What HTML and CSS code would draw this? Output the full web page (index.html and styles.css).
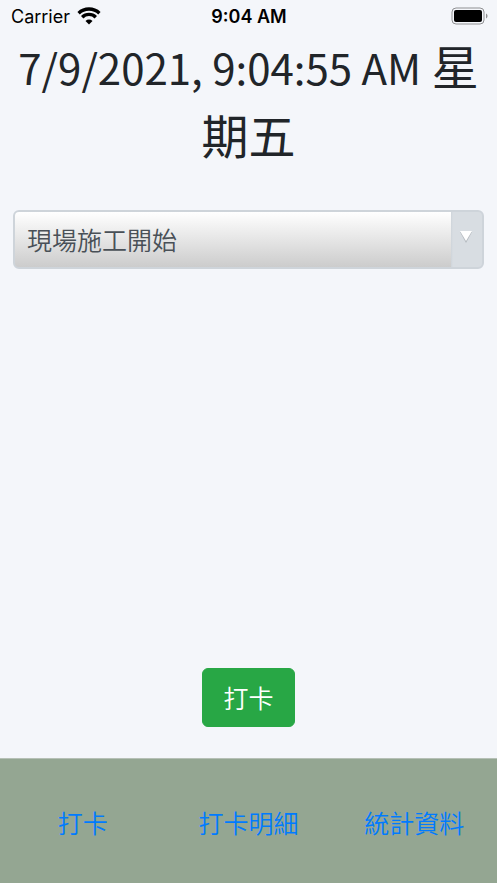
FILE: index.html
```
<!DOCTYPE html>
<html lang="zh-Hant">
<head>
  <meta charset="UTF-8" />
  <meta name="viewport" content="width=device-width, initial-scale=1.0" />
  <title>打卡</title>
  <link rel="stylesheet" href="styles.css">
</head>
<body>
  <header class="status-bar">
    <div class="carrier">
      <span>Carrier</span>
      <svg class="wifi" viewBox="0 0 24 18" aria-hidden="true">
        <path d="M1.600 6.200a15 15 0 0 1 20.800 0" />
        <path d="M5.200 10.200a9.600 9.600 0 0 1 13.600 0" />
        <path class="dot" d="M12 17.400 8.500 13.900a5 5 0 0 1 7 0z" />
      </svg>
    </div>
    <div class="status-time">9:04 AM</div>
    <div class="battery">
      <svg viewBox="0 0 38 19" aria-hidden="true">
        <rect class="shell" x="1" y="1" width="32" height="16" rx="4" />
        <rect x="3" y="3" width="28" height="12" rx="2" />
        <path class="cap" d="M35 6.500c2 .8 2 4.200 0 5z" />
      </svg>
    </div>
  </header>

  <main class="content">
    <h1 class="clock"><span class="clock-time">7/9/2021, 9:04:55 AM</span> 星期五</h1>

    <div class="select-wrap">
      <select class="punch-type" id="punchType" aria-label="打卡類別">
        <option>現場施工開始</option>
      </select>
      <svg class="arrow" viewBox="0 0 12 12" aria-hidden="true">
        <path class="arrow-shadow" d="M0 1h12L6 12z" />
        <path class="arrow-face" d="M0 0h12L6 10z" />
      </svg>
    </div>

    <button type="button" class="btn">打卡</button>
  </main>

  <nav class="tabs">
    <a href="#punch">打卡</a>
    <a href="#detail">打卡明細</a>
    <a href="#stats">統計資料</a>
  </nav>
</body>
</html>
```
FILE: styles.css
```
* {
  box-sizing: border-box;
}
body {
  margin: 0;
  min-height: 100vh;
  display: flex;
  flex-direction: column;
  background: #f4f6fa;
  color: #212529;
  font-family: "Noto Sans CJK TC", sans-serif;
  font-size: 25px;
  font-weight: 350;
}
.status-bar {
  display: grid;
  grid-template-columns: 1fr auto 1fr;
  align-items: center;
  height: 30px;
  padding: 2px 10px 0 11px;
  color: #000;
  font-family: Inter, sans-serif;
  font-size: 18px;
  font-weight: 400;
}
.carrier {
  display: flex;
  align-items: center;
  gap: 7px;
}
.wifi {
  width: 24px;
  height: 18px;
  fill: none;
  stroke: #000;
  stroke-width: 3.4;
}
.wifi .dot {
  fill: #000;
  stroke: none;
}
.status-time {
  font-weight: 600;
}
.battery {
  display: flex;
  justify-content: flex-end;
}
.battery svg {
  width: 38px;
  height: 19px;
  margin-right: -2px;
}
.battery .shell {
  fill: none;
  stroke: #8f9092;
}
.battery .cap {
  fill: #8f9092;
}
.content {
  flex: 1;
  display: flex;
  flex-direction: column;
  padding: 0 13px 31px;
}
.clock {
  margin: 0 0 42px;
  text-align: center;
  font-size: 47px;
  font-weight: 400;
  line-height: 69px;
}
.clock-time {
  font-size: 42px;
  line-height: 1;
}
.select-wrap {
  position: relative;
}
.punch-type {
  appearance: none;
  display: block;
  width: 100%;
  height: 59px;
  padding: 0 44px 2px 12px;
  border: 2px solid #ced4da;
  border-radius: 6px;
  background: linear-gradient(to right, transparent calc(100% - 31px), #ced4da 0, #d8dde2 calc(100% - 29px)), linear-gradient(#fff, #ccc);
  color: #495057;
  font: inherit;
}
.arrow {
  position: absolute;
  top: 21px;
  right: 12px;
  width: 12px;
  height: 12px;
  pointer-events: none;
}
.arrow-face {
  fill: #fff;
}
.arrow-shadow {
  fill: #b5babf;
}
.btn {
  align-self: center;
  height: 59px;
  margin-top: auto;
  padding: 0 20px 2px;
  border: 1px solid #28a745;
  border-radius: 6px;
  background: #28a745;
  color: #fff;
  font: inherit;
  cursor: pointer;
}
.tabs {
  display: grid;
  grid-template-columns: repeat(3, 1fr);
  align-items: center;
  height: 125px;
  padding-top: 2px;
  border-top: 1px solid #b6c0b6;
  background: #94a692;
  text-align: center;
}
.tabs a {
  color: #007bff;
  text-decoration: none;
}
```
